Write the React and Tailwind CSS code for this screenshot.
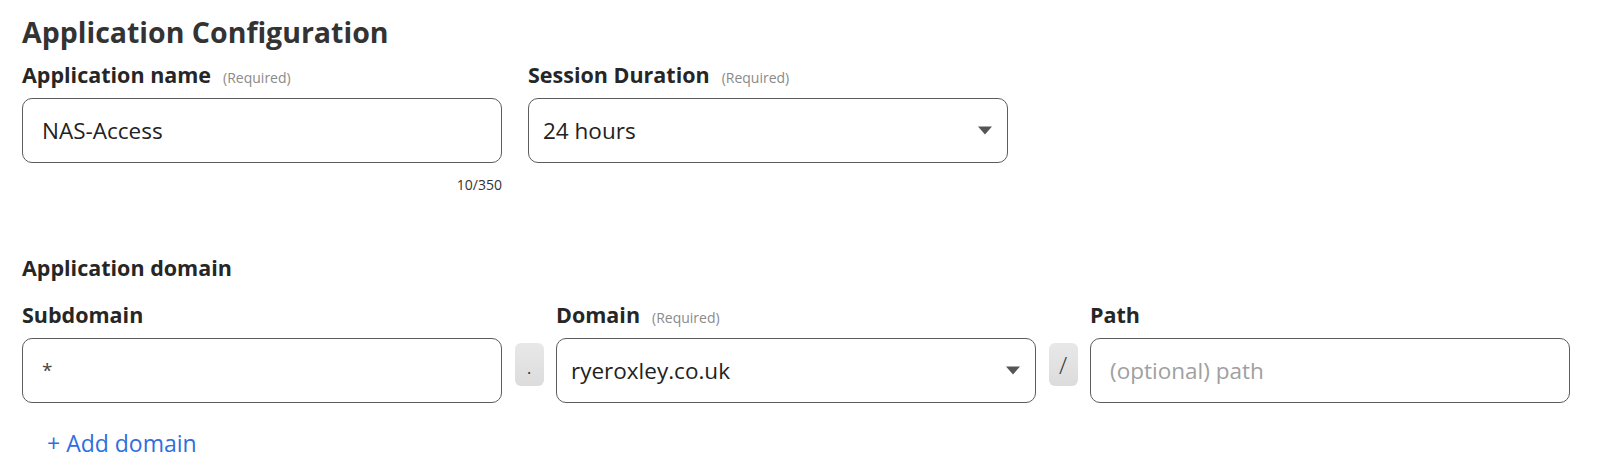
const FONT = { fontFamily: '"Open Sans", "Noto Sans", sans-serif' };

function Label({ children, required }) {
  return (
    <div className="flex items-baseline gap-3 h-[30px] mb-[8px]">
      <span className="text-[21.5px] leading-[30px] font-bold text-[#262626]">{children}</span>
      {required && <span className="text-[14px] leading-[30px] text-[#8a8a8a]">(Required)</span>}
    </div>
  );
}

function Field({ value, placeholder, select, small }) {
  return (
    <div className={`h-[65px] rounded-[10px] border border-[#5c5c5c] bg-white flex items-center pr-[15px] ${select ? 'pl-[14px]' : 'pl-[19px]'}`}>
      <span className={`flex-1 ${small ? 'text-[19px] text-[#444]' : 'text-[22.5px]'} ${placeholder ? 'text-[#a0a0a0]' : 'text-[#222]'}`}>
        {value || placeholder}
      </span>
      {select && (
        <svg width="14" height="9" viewBox="0 0 14 9"><polygon points="0,0.5 14,0.5 7,8.5" fill="#555" /></svg>
      )}
    </div>
  );
}

function Sep({ char }) {
  return (
    <div className="w-[29px] h-[43px] mt-[43px] rounded-[6px] bg-gradient-to-b from-[#e8e8e8] to-[#dcdcdc] flex items-center justify-center text-[24px] font-light text-[#333]">
      {char}
    </div>
  );
}

export default function App() {
  return (
    <div className="w-[1604px] h-[470px] bg-white pl-[22px] pt-[12px]" style={FONT}>
      <h1 className="text-[28.5px] font-bold text-[#333] leading-[40px]">Application Configuration</h1>

      <div className="flex gap-[26px] mt-[8px]">
        <div className="w-[480px]">
          <Label required>Application name</Label>
          <Field value="NAS-Access" />
          <div className="text-right text-[14px] leading-[20px] text-[#333] mt-[12px]">10/350</div>
        </div>
        <div className="w-[480px]">
          <Label required>Session Duration</Label>
          <Field value="24 hours" select />
        </div>
      </div>

      <div className="text-[21.5px] font-bold text-[#262626] mt-[58px] leading-[30px]">Application domain</div>

      <div className="flex items-start gap-[12.5px] mt-[17px]">
        <div className="w-[480px]">
          <Label>Subdomain</Label>
          <Field value="*" small />
        </div>
        <Sep char="." />
        <div className="w-[480px]">
          <Label required>Domain</Label>
          <Field value="ryeroxley.co.uk" select />
        </div>
        <Sep char="/" />
        <div className="w-[480px]">
          <Label>Path</Label>
          <Field placeholder="(optional) path" />
        </div>
      </div>

      <button className="mt-[24px] ml-[25px] text-[23px] leading-[32px] text-[#2f6ee0]">+ Add domain</button>
    </div>
  );
}
